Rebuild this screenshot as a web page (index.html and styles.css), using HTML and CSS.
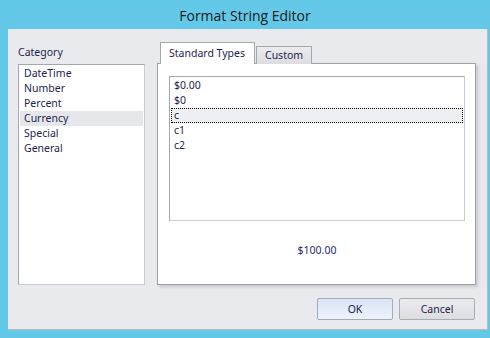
FILE: index.html
```html
<!DOCTYPE html>
<html lang="en">
<head>
    <meta charset="UTF-8">
    <title>Format String Editor</title>
    <link rel="stylesheet" href="styles.css">
</head>
<body>
    <div class="title-bar">Format String Editor</div>
    <div class="client">
        <div class="main-row">
            <div class="category">
                <div class="category-label">Category</div>
                <ul class="list category-list">
                    <li>DateTime</li>
                    <li>Number</li>
                    <li>Percent</li>
                    <li class="selected">Currency</li>
                    <li>Special</li>
                    <li>General</li>
                </ul>
            </div>
            <div class="tabs">
                <div class="tab-strip">
                    <div class="tab active">Standard Types</div>
                    <div class="tab">Custom</div>
                </div>
                <div class="tab-panel">
                    <ul class="list types-list">
                        <li>$0.00</li>
                        <li>$0</li>
                        <li class="focused">c</li>
                        <li>c1</li>
                        <li>c2</li>
                    </ul>
                    <div class="preview">$100.00</div>
                </div>
            </div>
        </div>
        <div class="buttons">
            <button class="btn btn-ok">OK</button>
            <button class="btn">Cancel</button>
        </div>
    </div>
</body>
</html>
```

FILE: styles.css
```css
body {
    margin: 0;
    width: 490px;
    height: 338px;
    background: #64c9e9;
    font-family: "Noto Sans", "Open Sans", sans-serif;
    font-size: 10.5px;
    color: #1e1e4e;
    overflow: hidden;
}
.title-bar {
    height: 29px;
    display: flex;
    align-items: center;
    justify-content: center;
    font-family: "Open Sans", "Noto Sans", sans-serif;
    font-size: 14px;
    color: #1a1a1a;
    padding-top: 1px;
    box-sizing: border-box;
}
.client {
    margin-left: 8px;
    width: 480px;
    height: 301px;
    background: #e9eaee;
    border-right: 1px solid #b9bcc4;
    border-bottom: 1px solid #b9bcc4;
    padding: 13px 11px 0 10px;
    box-sizing: border-box;
}
.main-row {
    display: flex;
    gap: 12px;
    height: 243px;
}
.category {
    width: 127px;
    display: flex;
    flex-direction: column;
}
.category-label {
    height: 22px;
    line-height: 13px;
    padding-top: 4px;
    box-sizing: border-box;
}
.list {
    list-style: none;
    margin: 0;
    background: #fff;
    border: 1px solid #b0b3bb;
    border-color: #a5a7af #c8cbd3 #c8cbd3 #a5a7af;
    box-sizing: border-box;
}
.list li {
    height: 15px;
    line-height: 15px;
    white-space: nowrap;
}
.category-list {
    flex: 1;
    padding: 1px 1px 0 1px;
}
.category-list li {
    padding-left: 4px;
}
.category-list li.selected {
    background: #e6e7eb;
}
.tabs {
    flex: 1;
    display: flex;
    flex-direction: column;
}
.tab-strip {
    display: flex;
    align-items: flex-end;
    height: 22px;
    padding-left: 3px;
    margin-bottom: -1px;
    position: relative;
    z-index: 1;
}
.tab {
    height: 18px;
    line-height: 17px;
    padding: 0 8px;
    border: 1px solid #a5a7af;
    border-bottom: none;
    background: linear-gradient(#ececef, #dcdde1);
    box-sizing: border-box;
    white-space: nowrap;
}
.tab.active {
    height: 22px;
    line-height: 20px;
    padding: 0 9px 0 8px;
    background: #fff;
    margin-right: 1px;
}
.tab-panel {
    flex: 1;
    background: #fff;
    border: 1px solid #9fa1a9;
    box-shadow: 2px 2px 3px rgba(0, 0, 0, 0.15);
    padding: 12px 10px 0 11px;
    display: flex;
    flex-direction: column;
}
.types-list {
    height: 145px;
    padding: 1px 1px 0 1px;
}
.types-list li {
    padding-left: 3px;
    box-sizing: border-box;
}
.types-list li.focused {
    background: #eeeff2;
    outline: 1px dotted #000;
    outline-offset: -1px;
}
.preview {
    text-align: center;
    margin-top: 22px;
    color: #1e2a6e;
}
.buttons {
    display: flex;
    justify-content: flex-end;
    gap: 6px;
    margin-top: 13px;
    padding-right: 1px;
}
.btn {
    width: 76px;
    height: 22px;
    font-family: "Noto Sans", "Open Sans", sans-serif;
    font-size: 10.5px;
    color: #1e1e4e;
    border: 1px solid #a8acb4;
    border-radius: 2px;
    background: linear-gradient(#ececef, #dcdde1);
    padding: 0;
}
.btn-ok {
    background: linear-gradient(#d9e4f7, #eef3fb);
    border-color: #a3abb9;
}
```
